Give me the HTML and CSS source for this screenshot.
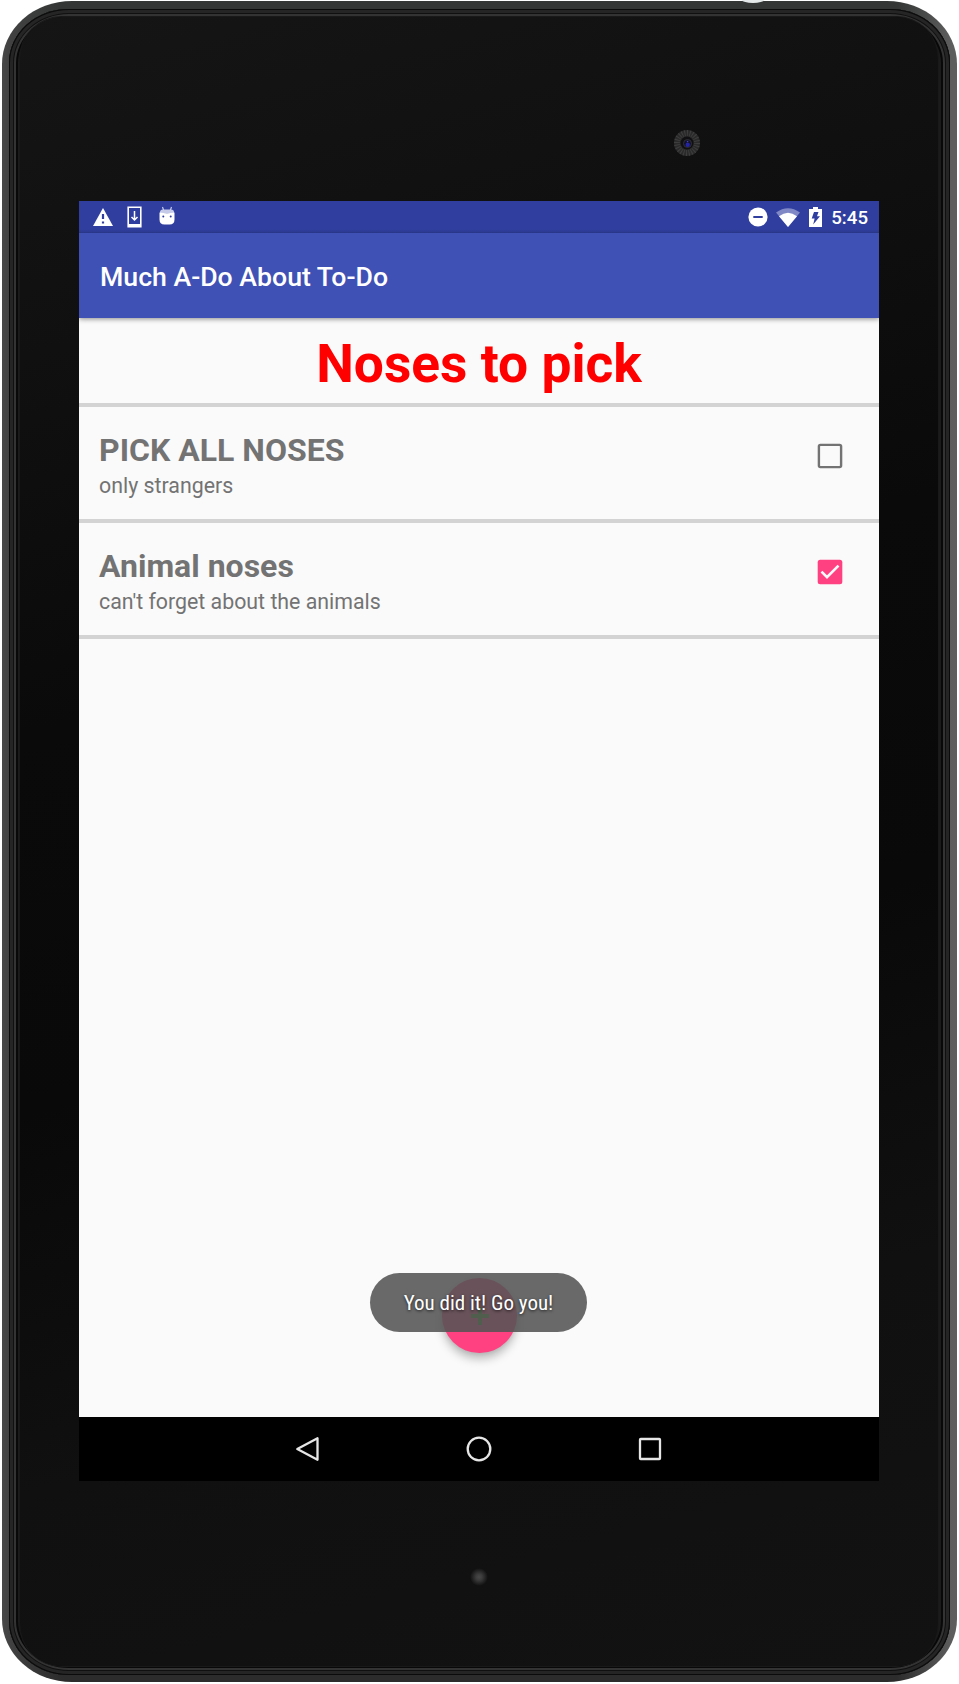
FILE: index.html
```html
<!DOCTYPE html>
<html lang="en">
<head>
<meta charset="utf-8">
<title>Much A-Do About To-Do</title>
<link rel="stylesheet" href="styles.css">
</head>
<body>
<div class="device">
  <div class="rim"><div class="bevel"><div class="glass">
    <div class="top-bezel"><svg class="camera" viewBox="0 0 28 28"><circle cx="14" cy="14" r="13" fill="#2a2a2a"/><circle cx="14" cy="14" r="10" fill="none" stroke="#3e3e3e" stroke-width="6" stroke-dasharray="1 1.6"/><circle cx="14" cy="14" r="6.5" fill="#101012"/><circle cx="14.5" cy="14.5" r="4" fill="#111128" stroke="#303038"/><circle cx="14.7" cy="15.7" r="2.2" fill="#2424a0"/><circle cx="14.6" cy="12.5" r=".8" fill="#4545bb"/></svg></div>
    <main class="screen">
      <div class="status">
        <svg class="s-warning" viewBox="0 0 20 18"><path d="M10 0 20 18H0Z" fill="#fff"/><path d="M10 6v5M10 13.5v2" stroke="#303f9f" stroke-width="2.2"/></svg>
        <svg class="s-download" viewBox="0 0 15 22"><path d="M1.2 1.2h12.6v19.6H1.2Z" fill="none" stroke="#fff" stroke-width="1.6"/><path d="M1 18h13v3H1Z" fill="#fff"/><path d="M7.5 5v9M4.500 11l3 3 3-3" fill="none" stroke="#fff" stroke-width="1.500"/></svg>
        <svg class="s-android" viewBox="0 0 16 19"><path d="M3.500 1l1.200 3.500M12.500 1l-1.200 3.500" stroke="#c5cae9" stroke-width="1.200"/><path d="M1 6Q1 3.500 4 3.500h8q3 0 3 2.500v1H1Z" fill="#c5cae9"/><path d="M.5 6.500q7.500 1.500 15 0v7q0 5-5 5h-5q-5 0-5-5Z" fill="#fff"/><circle cx="4.300" cy="10.500" r="1" fill="#303f9f"/><circle cx="11.700" cy="10.500" r="1" fill="#303f9f"/></svg>
        <span class="spacer"></span>
        <svg class="s-dnd" viewBox="0 0 20 20"><circle cx="10" cy="10" r="9.600" fill="#fff"/><path d="M5.300 10h9.400" stroke="#303f9f" stroke-width="2.200"/></svg>
        <svg class="s-wifi" viewBox="0 0 24 19"><path d="M0 4.500Q12-4 24 4.500L12 19Z" fill="#8088c5"/><path d="M3 8.200q9-7 18 0L12 19Z" fill="#fff"/></svg>
        <svg class="s-battery" viewBox="0 0 13 20"><path d="M4 0h5v2h4v18H0V2h4Z" fill="#fff"/><path d="M5 5h4.500L8 9.200h3L4.200 17.500 5.600 11.500H2.700Z" fill="#303f9f"/></svg>
        <span class="clock">5:45</span>
      </div>
      <header class="appbar">Much A-Do About To-Do</header>
      <h1 class="list-title">Noses to pick</h1>
      <section class="item">
        <div><h2>PICK ALL NOSES</h2><p>only strangers</p></div>
        <svg class="check" viewBox="0 0 26 26"><rect x="1.900" y="1.900" width="22.200" height="22.200" rx="1.500" fill="none" stroke="#737373" stroke-width="2.400"/></svg>
      </section>
      <section class="item">
        <div><h2>Animal noses</h2><p>can't forget about the animals</p></div>
        <svg class="check" viewBox="0 0 26 26"><rect x=".7" y=".7" width="24.600" height="24.600" rx="2.500" fill="#ff4081"/><path d="M4.500 12.600l5.500 5.500L21.500 6.600" fill="none" stroke="#fafafa" stroke-width="2.700"/></svg>
      </section>
      <div class="canvas">
        <div class="fab"><svg viewBox="0 0 18 18"><path d="M9 0v18M0 9h18" stroke="#2fa51f" stroke-width="4"/></svg></div>
        <div class="toast">You did it! Go you!</div>
      </div>
      <nav class="navbar">
        <svg viewBox="0 0 26 26"><path d="M22.500 2.200v21.600L2.300 13Z" fill="none" stroke="#e6e6e6" stroke-width="2.300" stroke-linejoin="round"/></svg>
        <svg viewBox="0 0 26 26"><circle cx="13" cy="13" r="11.300" fill="none" stroke="#e6e6e6" stroke-width="2.300"/></svg>
        <svg viewBox="0 0 26 26"><rect x="3" y="3" width="20" height="20" rx=".7" fill="none" stroke="#e6e6e6" stroke-width="2.300"/></svg>
      </nav>
    </main>
    <div class="led"></div>
  </div></div></div>
  <div class="notch"></div>
</div>
</body>
</html>
```
FILE: styles.css
```css
* { box-sizing: border-box; }
body { margin: 0; background: #fff; font-family: Roboto, sans-serif; overflow: hidden; }
h1, h2, p { margin: 0; }
svg { display: block; flex: none; }
.device { width: 959px; height: 1684px; padding: 1px 2px 2px; position: relative; }
.rim {
  height: 1681px; border-radius: 70px / 63px; padding: 8px 7px 7px;
  background: linear-gradient(90deg, #484848 0, #424242 7px, transparent 60px, transparent 895px, #5c5c5c 948px, #5e5e5e 100%), linear-gradient(#333635, #2c2c2c 60%, #2c2c2c);
}
.notch { position: absolute; left: 742px; top: 0; width: 22px; height: 3px; border-radius: 0 0 11px 11px / 0 0 3px 3px; background: #e4e8e8; }
.bevel {
  height: 100%; border-radius: 60px / 54px; padding: 8px 12px 9px 11px;
  background: #1b1b1b;
  box-shadow: inset 0 0 0 1px #0b0b0b, inset 0 0 0 4px #252525, inset 0 0 0 5px #101010, inset 0 0 0 7px #333, inset 0 0 0 9px #080808;
}
.glass {
  height: 100%; border-radius: 42px; overflow: hidden;
  display: flex; flex-direction: column; align-items: center;
  background: linear-gradient(165deg, #151515 0%, #101010 18%, #0a0a0a 38%, #090909 58%, #101010 78%, #121212 100%);
  box-shadow: 0 0 0 1px #191919;
}
.top-bezel { height: 184px; width: 800px; padding: 112px 0 0 594px; flex: none; }
.camera { width: 28px; height: 28px; }
.screen { width: 800px; height: 1280px; flex: none; background: #fafafa; display: flex; flex-direction: column; }
.glass > .screen, .glass > .top-bezel { margin-left: -1px; margin-right: -1px; }
.status {
  height: 32px; flex: none; background: linear-gradient(#303f9f 28px, #2c3a92 31px, #273481);
  color: #fff; display: flex; align-items: center; padding: 0 11px 0 14px;
}
.s-warning { width: 20px; height: 18px; }
.s-download { width: 15px; height: 22px; margin-left: 14px; }
.s-android { width: 16px; height: 19px; margin: 0 0 3px 17px; }
.spacer { flex: 1; }
.s-dnd { width: 20px; height: 20px; }
.s-wifi { width: 24px; height: 19px; margin-left: 8px; }
.s-battery { width: 13px; height: 20px; margin-left: 9px; }
.clock { font-size: 18.670px; line-height: 32px; font-weight: 500; margin-left: 9px; padding-top: 2px; }
.appbar {
  height: 85px; flex: none; background: #3f51b5; color: #fff;
  font-size: 26.670px; font-weight: 500; line-height: 88px; padding-left: 21px;
  box-shadow: 0 1px 5px rgba(0,0,0,.45); z-index: 1;
  clip-path: inset(0 0 -10px 0);
}
.list-title {
  height: 89px; flex: none; border-bottom: 4px solid #d3d3d3; padding-top: 2px;
  color: #f00; font-size: 53.330px; line-height: 89px; font-weight: 700; text-align: center;
}
.item { height: 116px; flex: none; border-bottom: 4px solid #d3d3d3; padding: 24px 36px 0 20px; display: flex; justify-content: space-between; color: #737373; }
.item h2 { font-size: 32px; line-height: 38px; font-weight: 700; }
.item p { font-size: 21.330px; line-height: 25px; margin-top: 4px; }
.check { width: 26px; height: 26px; margin-top: 12px; }
.canvas { flex: 1; position: relative; }
.fab {
  position: absolute; left: 363px; bottom: 64px; width: 75px; height: 75px; border-radius: 50%;
  background: #ff4081; display: flex; align-items: center; justify-content: center;
  box-shadow: 0 6px 10px rgba(0,0,0,.25), 0 1px 4px rgba(0,0,0,.08);
}
.fab svg { width: 18px; height: 18px; }
.toast {
  position: absolute; left: 291px; bottom: 85px; width: 217px; height: 59px; border-radius: 30px;
  background: rgba(84,84,84,.88); color: #fff; font-family: "Roboto Condensed", Roboto, sans-serif;
  font-size: 21px; line-height: 60px; text-align: center; text-shadow: 0 1px 3px rgba(0,0,0,.7);
}
.navbar { height: 64px; flex: none; background: #000; display: flex; justify-content: center; align-items: center; gap: 145px; }
.navbar svg { width: 26px; height: 26px; }
.led { width: 18px; height: 18px; margin-top: 87px; flex: none; border-radius: 50%; background: radial-gradient(circle, #484848 0, #3b3b3b 25%, transparent 70%); }
```
